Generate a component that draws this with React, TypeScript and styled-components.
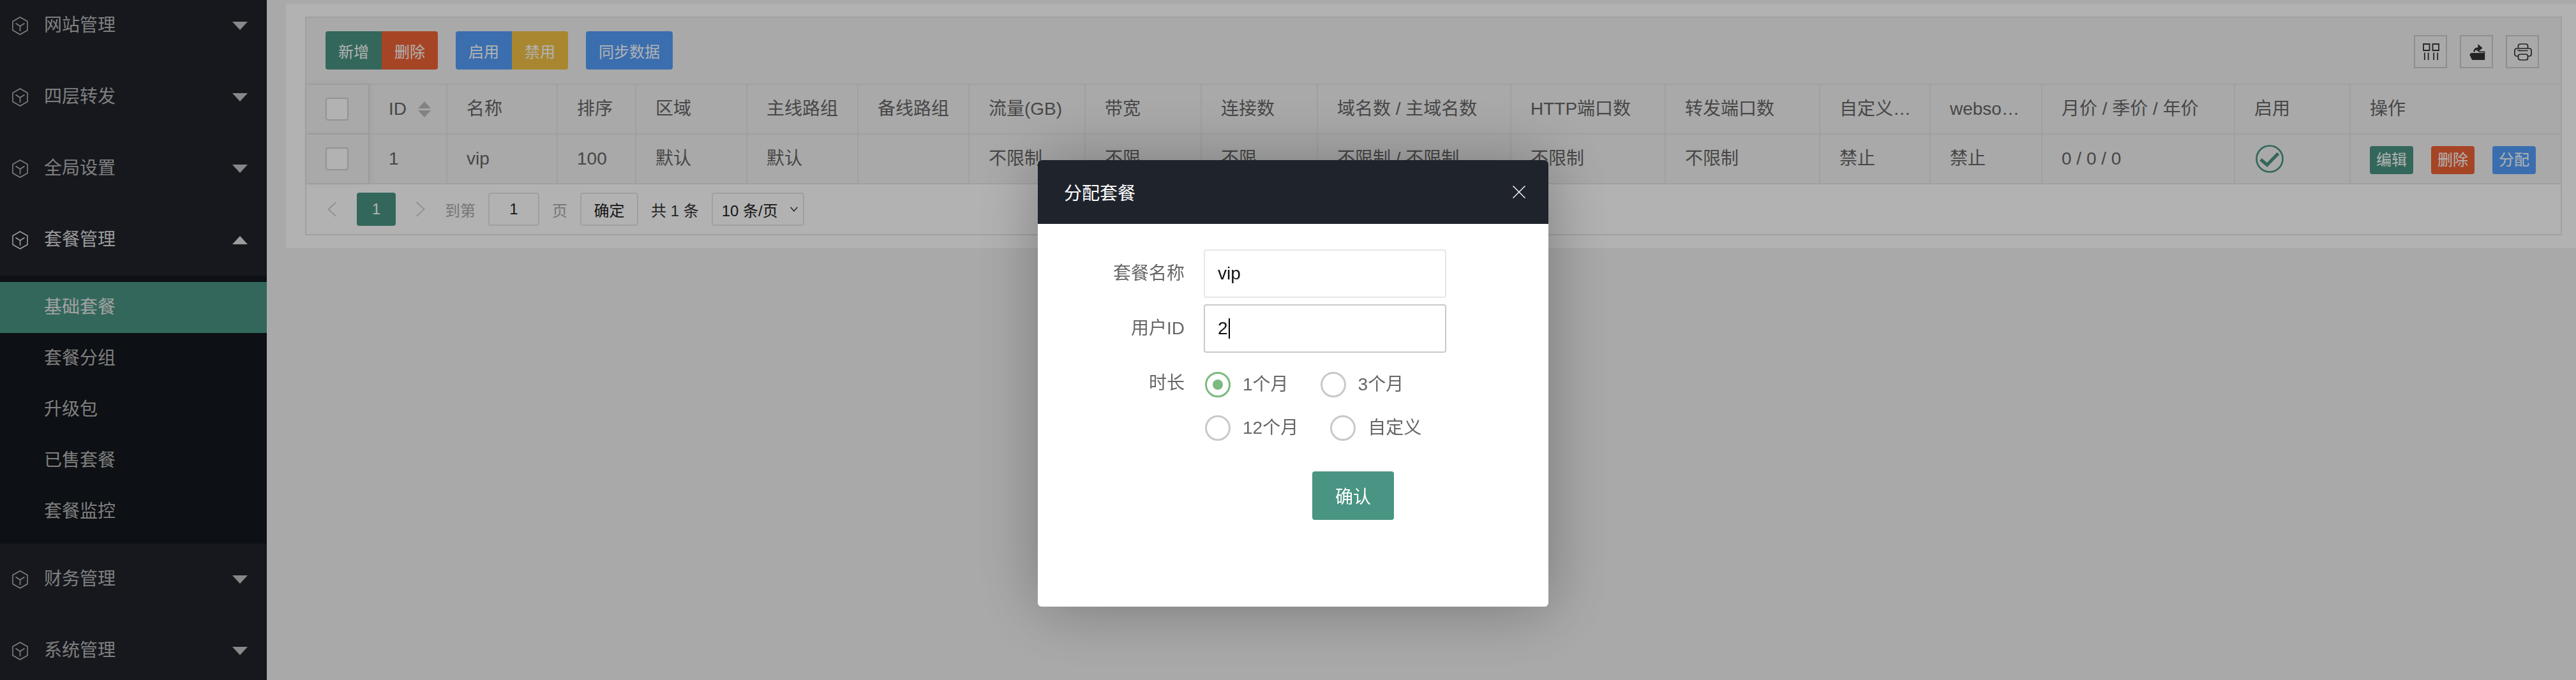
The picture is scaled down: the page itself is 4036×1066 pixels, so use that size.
import React from 'react';
import styled, { createGlobalStyle } from 'styled-components';

const GREEN = '#499483';
const RED = '#ee6437';
const BLUE = '#539efb';
const YELLOW = '#f3c245';
const LINE = '#e6e6e6';

const GlobalStyle = createGlobalStyle`
  html, body {
    margin: 0;
    padding: 0;
    width: 4036px;
    height: 1066px;
    overflow: hidden;
    background: #f2f2f2;
    font-family: "Liberation Sans", "Noto Sans CJK SC", sans-serif;
    font-size: 28px;
    color: #666;
  }
  * {
    box-sizing: border-box;
  }
`;

const Layout = styled.div`
  display: flex;
  width: 4036px;
  height: 1066px;
  overflow: hidden;
`;

const Sidebar = styled.aside`
  flex: 0 0 418px;
  height: 1066px;
  background: #20232b;
  overflow: hidden;
`;

const Nav = styled.nav`
  margin-top: -16px;
`;

const MenuHead = styled.div<{ $open?: boolean }>`
  display: flex;
  align-items: center;
  height: 112px;
  padding: 0 30px 0 19px;
  color: ${({ $open }) => ($open ? '#dedede' : '#b7b7b7')};
`;

const MenuLabel = styled.span`
  flex: 1;
  margin-left: 25px;
  line-height: 40px;
`;

const Arrow = styled.span<{ $up?: boolean }>`
  width: 0;
  height: 0;
  border-left: 12px solid transparent;
  border-right: 12px solid transparent;
  ${({ $up }) => ($up ? 'border-bottom: 13px solid #e0e0e0;' : 'border-top: 13px solid #c3c3c3;')}
`;

const SubMenu = styled.div`
  padding: 10px 0;
  background: #14171d;
`;

const SubItem = styled.div<{ $active?: boolean }>`
  height: 80px;
  line-height: 80px;
  padding-left: 69px;
  color: ${({ $active }) => ($active ? '#e8e8e8' : '#b7b7b7')};
  background: ${({ $active }) => ($active ? GREEN : 'transparent')};
`;

const Main = styled.main`
  flex: 1;
  min-width: 0;
  padding: 6px 0 0 30px;
`;

const Panel = styled.section`
  background: #fff;
  border-radius: 4px 0 0 4px;
  padding: 20px 22px 20px 30px;
`;

const TableBox = styled.div`
  border: 2px solid ${LINE};
`;

const Toolbar = styled.div`
  display: flex;
  align-items: flex-start;
  height: 105px;
  padding: 21px 34px 0 30px;
  background: #f2f2f2;
  border-bottom: 2px solid ${LINE};
`;

const ToolGroups = styled.div`
  flex: 1;
  display: flex;
  gap: 28px;
`;

const BtnGroup = styled.div`
  display: flex;
`;

const ToolBtn = styled.button<{ $color: string }>`
  height: 60px;
  padding: 0 20px;
  border: 0;
  font: inherit;
  font-size: 24px;
  color: #fff;
  background: ${({ $color }) => $color};
  border-radius: 4px;

  ${BtnGroup} > & {
    border-radius: 0;
  }
  ${BtnGroup} > &:first-child {
    border-radius: 4px 0 0 4px;
  }
  ${BtnGroup} > &:last-child {
    border-radius: 0 4px 4px 0;
  }
  ${BtnGroup} > & + & {
    border-left: 2px solid rgba(255, 255, 255, 0.5);
  }
`;

const ToolIcons = styled.div`
  display: flex;
  gap: 20px;
  margin-top: 6px;
`;

const ToolIcon = styled.div`
  display: flex;
  align-items: center;
  justify-content: center;
  width: 52px;
  height: 52px;
  padding-left: 2px;
  border: 2px solid #ccc;
  color: #333;
`;

const Row = styled.div`
  display: grid;
  grid-template-columns: 97px 122px 173px 123px 174px 174px 174px 182px 182px 182px 303px 242px 242px 173px 175px 302px 181px 1fr;
  height: 78px;
  background: #f2f2f2;
  border-bottom: 2px solid ${LINE};
`;

const Cell = styled.div`
  height: 76px;
  line-height: 76px;
  padding: 0 28px 0 30px;
  border-left: 2px solid ${LINE};
  white-space: nowrap;
  overflow: hidden;
  text-overflow: ellipsis;
  color: #666;
`;

const CheckCell = styled.div`
  position: relative;
  z-index: 1;
  display: flex;
  align-items: center;
  height: 76px;
  padding-left: 30px;
  background: #f2f2f2;
  box-shadow: 3px 0 10px rgba(0, 0, 0, 0.06);
`;

const FlexCell = styled(Cell)`
  display: flex;
  align-items: center;
  padding-right: 0;
`;

const StatusCell = styled(FlexCell)`
  padding-left: 32px;
  color: ${GREEN};
`;

const ActionCell = styled(FlexCell)`
  gap: 28px;
  padding-top: 4px;
`;

const Checkbox = styled.span`
  width: 36px;
  height: 36px;
  background: #fff;
  border: 2px solid #d2d2d2;
  border-radius: 4px;
`;

const SortIcon = styled.span`
  display: flex;
  flex-direction: column;
  gap: 3px;
  margin-left: 18px;
`;

const SortTri = styled.i<{ $up?: boolean }>`
  display: block;
  width: 0;
  height: 0;
  border-left: 10px solid transparent;
  border-right: 10px solid transparent;
  ${({ $up }) => ($up ? 'border-bottom: 11px solid #bbb;' : 'border-top: 11px solid #bbb;')}
`;

const ActionBtn = styled.button<{ $color: string }>`
  flex: 0 0 68px;
  height: 44px;
  padding: 0;
  border: 0;
  border-radius: 4px;
  font: inherit;
  font-size: 24px;
  line-height: 44px;
  color: #fff;
  background: ${({ $color }) => $color};
`;

const Pager = styled.div`
  display: flex;
  align-items: center;
  height: 78px;
  padding-left: 33px;
  background: #fff;
  font-size: 24px;
  color: #aaa;
`;

const PageNav = styled.div`
  display: flex;
  align-items: center;
  gap: 31px;
  margin-right: 31px;
`;

const PageNum = styled.span`
  display: block;
  width: 61px;
  height: 52px;
  line-height: 52px;
  text-align: center;
  color: #fff;
  background: ${GREEN};
  border-radius: 4px;
`;

const JumpGroup = styled.div`
  display: flex;
  align-items: center;
  gap: 20px;
`;

const Box = styled.span<{ $w: number }>`
  display: flex;
  align-items: center;
  justify-content: center;
  width: ${({ $w }) => $w}px;
  height: 52px;
  background: #fff;
  border: 2px solid ${LINE};
  border-radius: 4px;
  color: #222;
`;

const Total = styled.span`
  color: #333;
`;

const SelectBox = styled(Box)`
  justify-content: space-between;
  padding: 0 8px 0 14px;
`;

const Overlay = styled.div`
  position: fixed;
  inset: 0;
  z-index: 10;
  background: rgba(0, 0, 0, 0.3);
`;

const Modal = styled.div`
  position: fixed;
  left: 1626px;
  top: 251px;
  z-index: 11;
  width: 800px;
  height: 700px;
  background: #fff;
  border-radius: 6px;
  box-shadow: 2px 2px 100px rgba(0, 0, 0, 0.3);
  overflow: hidden;
`;

const ModalHead = styled.header`
  display: flex;
  align-items: center;
  justify-content: space-between;
  height: 100px;
  padding: 0 36px 0 41px;
  background: #1f232c;
  color: #fff;
`;

const Form = styled.div`
  padding: 40px 0 0;
`;

const FormRow = styled.div`
  display: flex;
  margin-bottom: 10px;
`;

const FormLabel = styled.label`
  width: 230px;
  height: 76px;
  line-height: 76px;
  text-align: right;
  color: #666;
`;

const Field = styled.div<{ $focus?: boolean }>`
  display: flex;
  align-items: center;
  width: 380px;
  height: 76px;
  margin-left: 30px;
  padding: 0 20px;
  background: #fff;
  border: 2px solid ${({ $focus }) => ($focus ? '#c9c9c9' : LINE)};
  border-radius: 4px;
  color: #111;
`;

const Caret = styled.span`
  width: 2px;
  height: 32px;
  margin-left: 1px;
  background: #000;
`;

const RadioLines = styled.div`
  margin-left: 32px;
  padding-top: 20px;
`;

const RadioLine = styled.div`
  display: flex;
  gap: 50px;
  height: 68px;
`;

const RadioItem = styled.div`
  display: flex;
  align-items: flex-start;
  gap: 19px;
  height: 40px;
  line-height: 40px;
  color: #666;
`;

const RadioDot = styled.span<{ $on?: boolean }>`
  display: flex;
  align-items: center;
  justify-content: center;
  width: 40px;
  height: 40px;
  border: 3px solid ${({ $on }) => ($on ? '#7cb97f' : '#c9c9c9')};
  border-radius: 50%;

  &::after {
    content: '';
    display: ${({ $on }) => ($on ? 'block' : 'none')};
    width: 16px;
    height: 16px;
    border-radius: 50%;
    background: #7cb97f;
  }
`;

const ConfirmRow = styled.div`
  padding: 10px 0 0 430px;
`;

const ConfirmBtn = styled.button`
  width: 128px;
  height: 76px;
  border: 0;
  border-radius: 4px;
  font: inherit;
  color: #fff;
  background: ${GREEN};
`;

const BoxGlyph = () => (
  <svg width="25" height="29" viewBox="0 0 25 29" fill="none" stroke="currentColor" strokeWidth="1.6">
    <path d="M12.5 1 24 7.5v14L12.5 28 1 21.5v-14z" />
    <path d="M5.5 10.5l7 4.5 7-4.5M12.5 15v8" />
  </svg>
);

const Chevron = ({ right }: { right?: boolean }) => (
  <svg width="15" height="24" viewBox="0 0 15 24" fill="none" stroke="#d2d2d2" strokeWidth="2">
    <path d={right ? 'M1.5 1l12 11-12 11' : 'M13.5 1l-12 11 12 11'} />
  </svg>
);

const ColsIcon = () => (
  <svg width="26" height="26" viewBox="0 0 26 26" fill="none" stroke="currentColor" strokeWidth="1.8">
    <path d="M1 1h9.500v10H1zM15.500 1H25v10h-9.500zM2.800 14.500V26M8.600 14.500V26M17.200 14.500V26M23.200 14.500V26" />
  </svg>
);

const ExportIcon = () => (
  <svg width="25" height="26" viewBox="0 0 25 26" fill="currentColor">
    <path d="M2.600 15h21.600v11H4.200L.2 17.800z" />
    <path d="M11 10h3.400l1.800 2.400h8v3h-1.600v-1.400h-7.200L13.600 11.600H11z" />
    <path d="M6.400 13.500C6.400 9 9 6.500 13.400 6.500V1l7.200 6.200-7.200 6V9.500c-2.600 0-4.600 1-5.200 4z" />
  </svg>
);

const PrintIcon = () => (
  <svg width="28" height="27" viewBox="0 0 28 27" fill="none" stroke="currentColor" strokeWidth="1.7">
    <path d="M6.500 8V4a3 3 0 0 1 3-3h9a3 3 0 0 1 3 3v4" />
    <path d="M6.500 20H4a3 3 0 0 1-3-3v-6a3 3 0 0 1 3-3h20a3 3 0 0 1 3 3v6a3 3 0 0 1-3 3h-2.500" />
    <path d="M6.500 11.500h15M9.500 17h9a3 3 0 0 1 3 3v3a3 3 0 0 1-3 3h-9a3 3 0 0 1-3-3v-3a3 3 0 0 1 3-3z" />
    <path d="M4.500 10.600h2M8 10.600h1.500" strokeWidth="1" />
  </svg>
);

const CheckCircle = () => (
  <svg width="44" height="44" viewBox="0 0 44 44" fill="none" stroke="currentColor">
    <circle cx="22" cy="22" r="20.500" strokeWidth="2.600" />
    <path d="M8 23l10 8.500L35.500 13.500" strokeWidth="5" />
  </svg>
);

const CloseIcon = () => (
  <svg width="20" height="20" viewBox="0 0 20 20" stroke="#fff" strokeWidth="1.4">
    <path d="M.5.5l19 19M19.500.5l-19 19" />
  </svg>
);

const menusTop = ['网站管理', '四层转发', '全局设置'];
const subItems = ['基础套餐', '套餐分组', '升级包', '已售套餐', '套餐监控'];
const menusBottom = ['财务管理', '系统管理'];

const headers = [
  '名称', '排序', '区域', '主线路组', '备线路组', '流量(GB)', '带宽', '连接数',
  '域名数 / 主域名数', 'HTTP端口数', '转发端口数', '自定义端口', 'websocket', '月价 / 季价 / 年价', '启用', '操作',
];

const values = [
  'vip', '100', '默认', '默认', '', '不限制', '不限', '不限',
  '不限制 / 不限制', '不限制', '不限制', '禁止', '禁止', '0 / 0 / 0',
];

const App: React.FC = () => (
  <>
    <GlobalStyle />
    <Layout>
      <Sidebar>
        <Nav>
          {menusTop.map((name) => (
            <MenuHead key={name}>
              <BoxGlyph />
              <MenuLabel>{name}</MenuLabel>
              <Arrow />
            </MenuHead>
          ))}
          <MenuHead $open>
            <BoxGlyph />
            <MenuLabel>套餐管理</MenuLabel>
            <Arrow $up />
          </MenuHead>
          <SubMenu>
            {subItems.map((name, i) => (
              <SubItem key={name} $active={i === 0}>
                {name}
              </SubItem>
            ))}
          </SubMenu>
          {menusBottom.map((name) => (
            <MenuHead key={name}>
              <BoxGlyph />
              <MenuLabel>{name}</MenuLabel>
              <Arrow />
            </MenuHead>
          ))}
        </Nav>
      </Sidebar>

      <Main>
        <Panel>
          <TableBox>
            <Toolbar>
              <ToolGroups>
                <BtnGroup>
                  <ToolBtn $color={GREEN}>新增</ToolBtn>
                  <ToolBtn $color={RED}>删除</ToolBtn>
                </BtnGroup>
                <BtnGroup>
                  <ToolBtn $color={BLUE}>启用</ToolBtn>
                  <ToolBtn $color={YELLOW}>禁用</ToolBtn>
                </BtnGroup>
                <ToolBtn $color={BLUE}>同步数据</ToolBtn>
              </ToolGroups>
              <ToolIcons>
                <ToolIcon><ColsIcon /></ToolIcon>
                <ToolIcon><ExportIcon /></ToolIcon>
                <ToolIcon><PrintIcon /></ToolIcon>
              </ToolIcons>
            </Toolbar>

            <Row>
              <CheckCell><Checkbox /></CheckCell>
              <FlexCell>
                ID
                <SortIcon>
                  <SortTri $up />
                  <SortTri />
                </SortIcon>
              </FlexCell>
              {headers.map((h) => (
                <Cell key={h}>{h}</Cell>
              ))}
            </Row>

            <Row>
              <CheckCell><Checkbox /></CheckCell>
              <Cell>1</Cell>
              {values.map((v, i) => (
                <Cell key={i}>{v}</Cell>
              ))}
              <StatusCell><CheckCircle /></StatusCell>
              <ActionCell>
                <ActionBtn $color={GREEN}>编辑</ActionBtn>
                <ActionBtn $color={RED}>删除</ActionBtn>
                <ActionBtn $color={BLUE}>分配</ActionBtn>
              </ActionCell>
            </Row>

            <Pager>
              <PageNav>
                <Chevron />
                <PageNum>1</PageNum>
                <Chevron right />
              </PageNav>
              <JumpGroup>
                <span>到第</span>
                <Box $w={80}>1</Box>
                <span>页</span>
                <Box $w={91}>确定</Box>
                <Total>共 1 条</Total>
                <SelectBox $w={145}>
                  10 条/页
                  <svg width="12" height="8" viewBox="0 0 12 8" fill="none" stroke="#333" strokeWidth="1.4">
                    <path d="M.7.7 6 7l5.300-6.300" />
                  </svg>
                </SelectBox>
              </JumpGroup>
            </Pager>
          </TableBox>
        </Panel>
      </Main>
    </Layout>

    <Overlay />

    <Modal>
      <ModalHead>
        <span>分配套餐</span>
        <CloseIcon />
      </ModalHead>
      <Form>
        <FormRow>
          <FormLabel>套餐名称</FormLabel>
          <Field>vip</Field>
        </FormRow>
        <FormRow>
          <FormLabel>用户ID</FormLabel>
          <Field $focus>
            2
            <Caret />
          </Field>
        </FormRow>
        <FormRow>
          <FormLabel>时长</FormLabel>
          <RadioLines>
            <RadioLine>
              <RadioItem><RadioDot $on />1个月</RadioItem>
              <RadioItem><RadioDot />3个月</RadioItem>
            </RadioLine>
            <RadioLine>
              <RadioItem><RadioDot />12个月</RadioItem>
              <RadioItem><RadioDot />自定义</RadioItem>
            </RadioLine>
          </RadioLines>
        </FormRow>
        <ConfirmRow>
          <ConfirmBtn>确认</ConfirmBtn>
        </ConfirmRow>
      </Form>
    </Modal>
  </>
);

export default App;
